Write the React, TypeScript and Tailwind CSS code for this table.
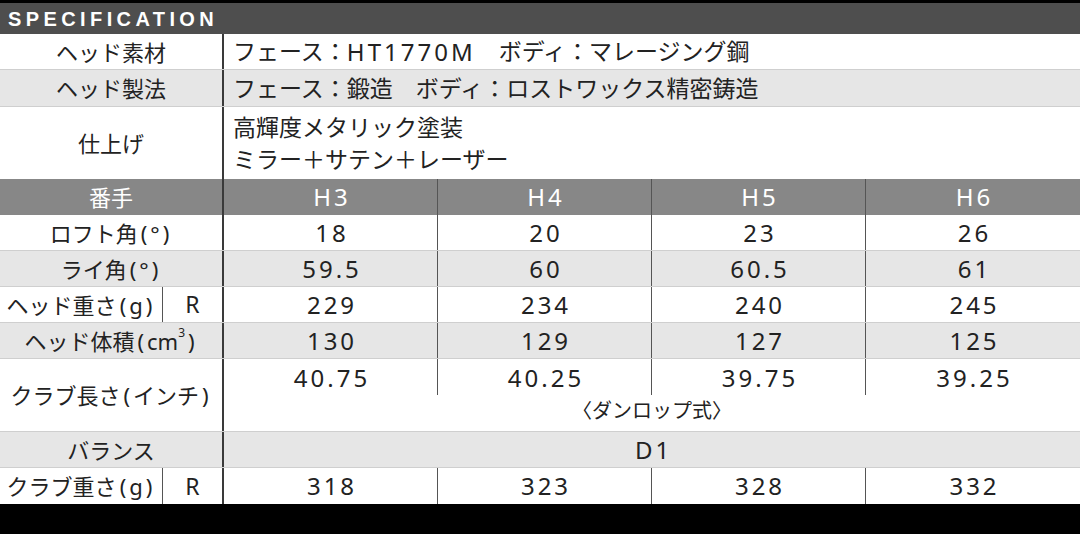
import React from "react";

const FONT = { fontFamily: '"Noto Sans", "Noto Sans CJK JP", sans-serif' };

// latin / digits get wider spacing like the printed spec sheet
function L({ children }: { children: React.ReactNode }) {
  return <span className="text-[24px] tracking-[3px]">{children}</span>;
}
function P({ children }: { children: React.ReactNode }) {
  return <span className="px-[3px]">{children}</span>;
}

type NumRow = { label: React.ReactNode; key: string; sub?: string; vals: string[]; grey: boolean };

const NUM_ROWS: NumRow[] = [
  { key: "loft", label: <>ロフト角<P>(</P>°<P>)</P></>, vals: ["18", "20", "23", "26"], grey: false },
  { key: "lie", label: <>ライ角<P>(</P>°<P>)</P></>, vals: ["59.5", "60", "60.5", "61"], grey: true },
  { key: "hw", label: <>ヘッド重さ<P>(</P>g<P>)</P></>, sub: "R", vals: ["229", "234", "240", "245"], grey: false },
  { key: "vol", label: <>ヘッド体積<P>(</P>cm<sup className="text-[12px] -top-[0.6em]">3</sup><P>)</P></>, vals: ["130", "129", "127", "125"], grey: true },
];

function Label({ label, sub }: { label: React.ReactNode; sub?: string }) {
  if (!sub) {
    return (
      <div className="w-[224px] shrink-0 flex items-center justify-center border-r-2 border-[#3a3a3a] whitespace-nowrap">
        {label}
      </div>
    );
  }
  return (
    <div className="w-[224px] shrink-0 flex border-r-2 border-[#3a3a3a]">
      <div className="w-[163px] flex items-center justify-center border-r border-[#555] whitespace-nowrap">
        {label}
      </div>
      <div className="flex-1 flex items-center justify-center text-[23px]">{sub}</div>
    </div>
  );
}

function Cells({ vals }: { vals: string[] }) {
  return (
    <div className="flex-1 grid grid-cols-4">
      {vals.map((v, i) => (
        <div
          key={i}
          className={"flex items-center justify-center pl-[3px] " + (i < 3 ? "border-r border-[#555]" : "")}
        >
          <L>{v}</L>
        </div>
      ))}
    </div>
  );
}

export default function App() {
  return (
    <div className="w-[1080px] h-[534px] bg-black pt-[3px] text-[#222] text-[22px] leading-none" style={FONT}>
      <div className="h-[31px] bg-[#4e4e4e] flex items-center pl-[8px]">
        <span
          className="text-white font-bold text-[20px] tracking-[0.22em]"
          style={{ fontFamily: '"Liberation Sans", Arial, sans-serif' }}
        >
          SPECIFICATION
        </span>
      </div>

      {/* spec text rows */}
      <div className="flex h-[36px] bg-white border-b border-[#cfcfcf]">
        <Label label="ヘッド素材" />
        <div className="flex-1 flex items-center pl-[9px] whitespace-pre text-[23px]">
          フェース：<span className="text-[24px] tracking-[3px]">HT1770M</span>　ボディ：マレージング鋼
        </div>
      </div>
      <div className="flex h-[37px] bg-[#e6e6e6] border-b border-[#cfcfcf]">
        <Label label="ヘッド製法" />
        <div className="flex-1 flex items-center pl-[9px] whitespace-pre text-[23px]">
          フェース：鍛造　ボディ：ロストワックス精密鋳造
        </div>
      </div>
      <div className="flex h-[72px] bg-white">
        <Label label="仕上げ" />
        <div className="flex-1 flex flex-col justify-center pl-[9px] gap-[9px] text-[23px]">
          <div>高輝度メタリック塗装</div>
          <div>ミラー＋サテン＋レーザー</div>
        </div>
      </div>

      {/* number header */}
      <div className="flex h-[36px] bg-[#878787] text-white">
        <Label label="番手" />
        <Cells vals={["H3", "H4", "H5", "H6"]} />
      </div>

      {NUM_ROWS.map((r) => (
        <div
          key={r.key}
          className={"flex h-[36px] border-b border-[#cfcfcf] " + (r.grey ? "bg-[#e6e6e6]" : "bg-white")}
        >
          <Label label={r.label} sub={r.sub} />
          <Cells vals={r.vals} />
        </div>
      ))}

      <div className="flex h-[73px] bg-white border-b border-[#cfcfcf]">
        <Label label={<>クラブ長さ<P>(</P>インチ<P>)</P></>} />
        <div className="flex-1 flex flex-col">
          <div className="h-[36px] grid grid-cols-4">
            {["40.75", "40.25", "39.75", "39.25"].map((v, i) => (
              <div
                key={v}
                className={"flex justify-center pt-[7px] pl-[3px] " + (i < 3 ? "border-r border-[#555]" : "")}
              >
                <L>{v}</L>
              </div>
            ))}
          </div>
          <div className="flex-1 flex items-center justify-center text-[20px] pb-[4px]">〈ダンロップ式〉</div>
        </div>
      </div>

      <div className="flex h-[36px] bg-[#e6e6e6] border-b border-[#cfcfcf]">
        <Label label="バランス" />
        <div className="flex-1 flex items-center justify-center pl-[3px]">
          <L>D1</L>
        </div>
      </div>

      <div className="flex h-[36px] bg-white">
        <Label label={<>クラブ重さ<P>(</P>g<P>)</P></>} sub="R" />
        <Cells vals={["318", "323", "328", "332"]} />
      </div>
    </div>
  );
}
